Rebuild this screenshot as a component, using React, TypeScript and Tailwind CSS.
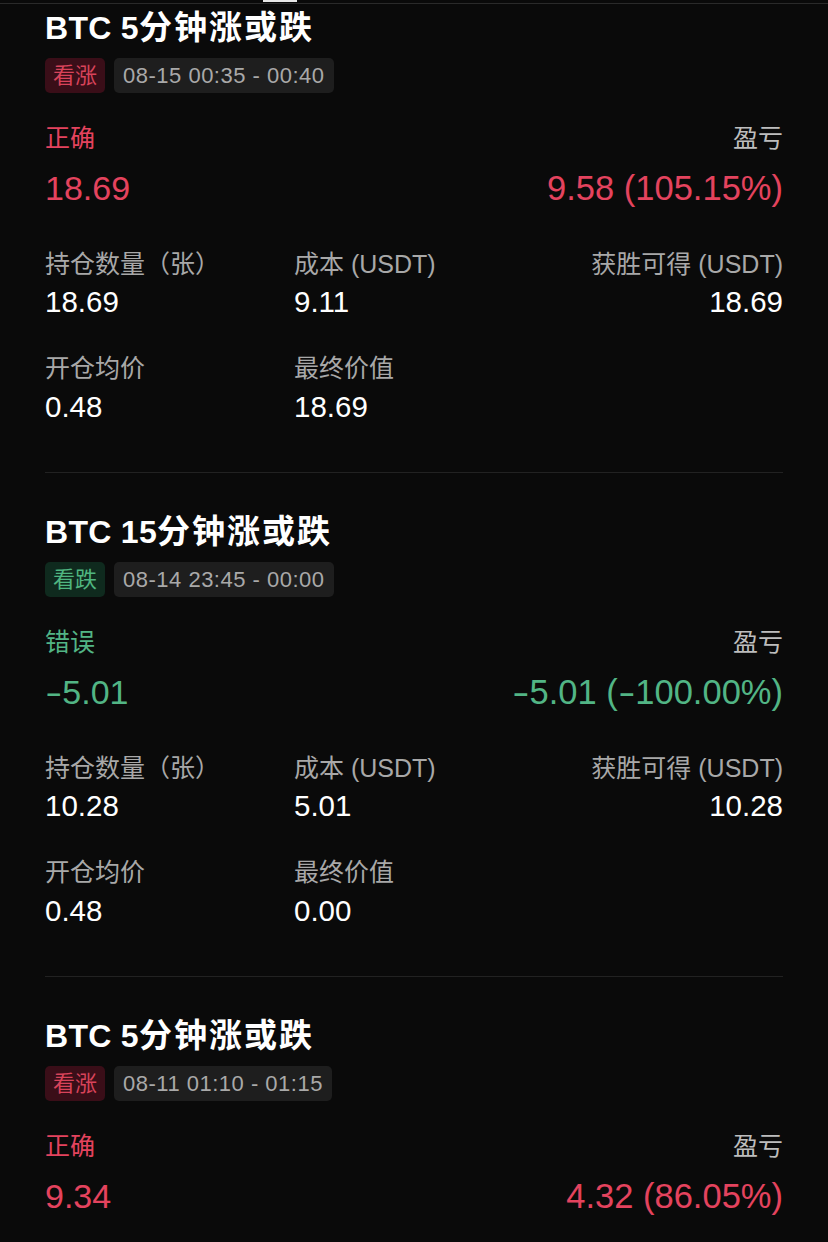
import React from "react";

type Card = {
  minutes: string;
  up: boolean;
  time: string;
  correct: boolean;
  result: string;
  pnl: string;
  qty: string;
  cost: string;
  win: string;
  avg: string;
  final: string;
};

const cards: Card[] = [
  {
    minutes: "5",
    up: true,
    time: "08-15 00:35 - 00:40",
    correct: true,
    result: "18.69",
    pnl: "9.58 (105.15%)",
    qty: "18.69",
    cost: "9.11",
    win: "18.69",
    avg: "0.48",
    final: "18.69",
  },
  {
    minutes: "15",
    up: false,
    time: "08-14 23:45 - 00:00",
    correct: false,
    result: "-5.01",
    pnl: "-5.01 (-100.00%)",
    qty: "10.28",
    cost: "5.01",
    win: "10.28",
    avg: "0.48",
    final: "0.00",
  },
  {
    minutes: "5",
    up: true,
    time: "08-11 01:10 - 01:15",
    correct: true,
    result: "9.34",
    pnl: "4.32 (86.05%)",
    qty: "9.34",
    cost: "5.02",
    win: "9.34",
    avg: "0.54",
    final: "9.34",
  },
];

function Num({ text }: { text: string }) {
  const parts = text.split("-");
  return (
    <>
      {parts.map((p, i) => (
        <React.Fragment key={i}>
          {i > 0 && <span className="inline-block scale-x-[1.5] mx-[3px]">-</span>}
          {p}
        </React.Fragment>
      ))}
    </>
  );
}

function Label({ children, right }: { children: React.ReactNode; right?: boolean }) {
  return (
    <div className={`text-[25px] leading-[32px] text-[#a8a8a8] whitespace-nowrap ${right ? "text-right" : ""}`}>
      {children}
    </div>
  );
}

function Value({ children, right }: { children: React.ReactNode; right?: boolean }) {
  return (
    <div className={`mt-[4px] text-[29.5px] leading-[36px] text-white whitespace-nowrap ${right ? "text-right" : ""}`}>
      {children}
    </div>
  );
}

function CardView({ c, last }: { c: Card; last: boolean }) {
  const accent = c.correct ? "text-[#e4435e]" : "text-[#52b585]";
  return (
    <div className={last ? "" : "pb-[39px]"}>
      <div className="h-[40px] flex items-center font-bold text-white whitespace-nowrap">
        <span className="text-[32px] leading-[40px] tracking-[0.3px]">BTC {c.minutes}</span>
        <span className="text-[33px] leading-[40px] tracking-[2px]">分钟涨或跌</span>
      </div>
      <div className="mt-[10px] flex gap-[9px] h-[35px]">
        <div
          className={`h-[35px] px-[8px] rounded-[5px] flex items-center text-[22px] ${
            c.up ? "bg-[#3a0e18] text-[#d8435a]" : "bg-[#0f2a1e] text-[#4fb580]"
          }`}
        >
          {c.up ? "看涨" : "看跌"}
        </div>
        <div className="h-[35px] px-[9px] rounded-[5px] flex items-center bg-[#1e1e1e] text-[22px] text-[#a9a9a9] tracking-[0.5px] whitespace-nowrap">
          {c.time}
        </div>
      </div>
      <div className="mt-[29px] flex justify-between items-center h-[32px]">
        <span className={`text-[25px] leading-[32px] ${accent}`}>{c.correct ? "正确" : "错误"}</span>
        <span className="text-[25px] leading-[32px] text-[#bdbdbd]">盈亏</span>
      </div>
      <div className="mt-[14px] flex justify-between items-center h-[40px]">
        <span className={`text-[34px] leading-[40px] ${accent} whitespace-nowrap`}>
          <Num text={c.result} />
        </span>
        <span className={`text-[34.5px] leading-[40px] ${accent} whitespace-nowrap`}>
          <Num text={c.pnl} />
        </span>
      </div>
      {!last && (
        <>
          <div className="mt-[40px] grid grid-cols-[249px_1fr_1fr]">
            <div>
              <Label>持仓数量（张）</Label>
              <Value>{c.qty}</Value>
            </div>
            <div>
              <Label>成本 (USDT)</Label>
              <Value>{c.cost}</Value>
            </div>
            <div>
              <Label right>获胜可得 (USDT)</Label>
              <Value right>{c.win}</Value>
            </div>
          </div>
          <div className="mt-[32px] grid grid-cols-[249px_1fr_1fr]">
            <div>
              <Label>开仓均价</Label>
              <div className="mt-[5px] text-[29.5px] leading-[36px] text-white">{c.avg}</div>
            </div>
            <div>
              <Label>最终价值</Label>
              <div className="mt-[5px] text-[29.5px] leading-[36px] text-white">{c.final}</div>
            </div>
            <div />
          </div>
          <div className="mt-[47px] h-px bg-[#222222]" />
        </>
      )}
    </div>
  );
}

export default function App() {
  return (
    <div
      className="w-[828px] h-[1242px] overflow-hidden bg-[#0a0a0a]"
      style={{ fontFamily: '"Liberation Sans", "Noto Sans CJK SC", sans-serif' }}
    >
      <div className="h-[3px]">
        <div className="ml-[263px] w-[34px] h-[2px] bg-[#e8e8e8]" />
      </div>
      <div className="h-px bg-[#2a2a2a]" />
      <div className="px-[45px] pt-[4px]">
        {cards.map((c, i) => (
          <CardView key={i} c={c} last={i === cards.length - 1} />
        ))}
      </div>
    </div>
  );
}
